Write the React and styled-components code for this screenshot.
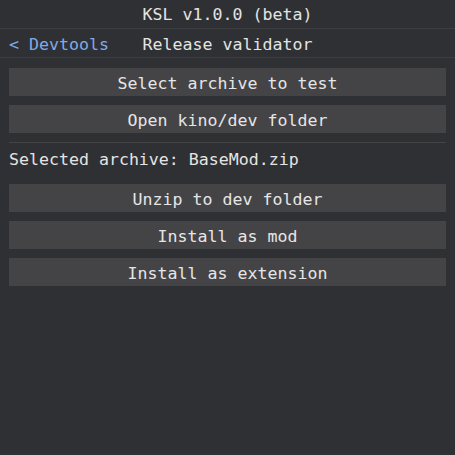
import React from "react";
import styled, { createGlobalStyle } from "styled-components";

const Global = createGlobalStyle`
  html, body { margin: 0; padding: 0; background: #2f3033; }
  body { font-family: "DejaVu Sans Mono", "Liberation Mono", monospace; }
`;

const Page = styled.div`
  width: 455px;
  height: 455px;
  background: #2f3033;
  color: #e4e4e4;
  font-size: 16.6px;
  display: flex;
  flex-direction: column;
`;

const TitleBar = styled.div`
  box-sizing: border-box;
  height: 29px;
  padding-top: 1px;
  line-height: 27px;
  text-align: center;
  border-bottom: 1px solid #3c3d41;
`;

const NavBar = styled.div`
  box-sizing: border-box;
  height: 29px;
  padding-top: 2px;
  display: grid;
  grid-template-columns: 1fr auto 1fr;
  align-items: center;
  border-bottom: 1px solid #3c3d41;
`;

const BackLink = styled.span`
  color: #80aae6;
  padding-left: 9px;
`;

const NavTitle = styled.span`
  color: #e4e4e4;
`;

const Content = styled.div`
  display: flex;
  flex-direction: column;
  padding: 10px 9px;
`;

const Button = styled.div`
  box-sizing: border-box;
  height: 28px;
  padding-top: 3px;
  line-height: 25px;
  background: #444447;
  color: #e6e6e6;
  text-align: center;
  margin-bottom: ${(p) => (p.$last ? "0" : "9px")};
`;

const Separator = styled.div`
  height: 1px;
  background: #444447;
`;

const Label = styled.div`
  box-sizing: border-box;
  height: 32px;
  padding-top: 2px;
  line-height: 30px;
  margin-bottom: 9px;
`;

export default function App() {
  return (
    <>
      <Global />
      <Page>
        <TitleBar>KSL v1.0.0 (beta)</TitleBar>
        <NavBar>
          <BackLink>&lt; Devtools</BackLink>
          <NavTitle>Release validator</NavTitle>
          <span />
        </NavBar>
        <Content>
          <Button>Select archive to test</Button>
          <Button>Open kino/dev folder</Button>
          <Separator />
          <Label>Selected archive: BaseMod.zip</Label>
          <Button>Unzip to dev folder</Button>
          <Button>Install as mod</Button>
          <Button $last>Install as extension</Button>
        </Content>
      </Page>
    </>
  );
}
